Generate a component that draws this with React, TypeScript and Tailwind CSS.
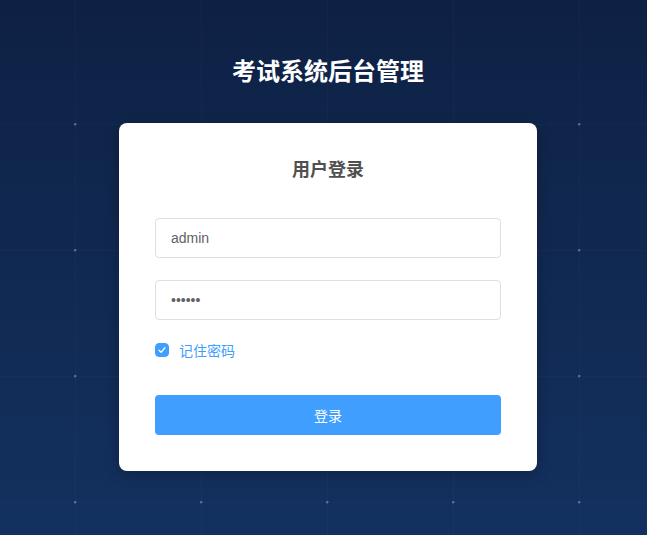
import React, { useState } from 'react';

const cjk = "font-['Microsoft_YaHei','Noto_Sans_CJK_SC',sans-serif]";

const App = () => {
  const [remember, setRemember] = useState(true);

  return (
    <div className="h-screen w-full overflow-hidden pl-[9px] bg-[radial-gradient(circle_at_1px_1px,rgba(140,165,210,0.5)_1.1px,transparent_1.9px),linear-gradient(to_right,rgba(255,255,255,0.02)_1px,transparent_1px),linear-gradient(to_bottom,rgba(255,255,255,0.02)_1px,transparent_1px),linear-gradient(180deg,#0e2144_0%,#13315f_100%)] bg-[#0f2548] [background-size:126px_126px,126px_126px,126px_126px,100%_100%] [background-position:74px_123px,75px_124px,75px_124px,0_0]">
      <h1
        className={`${cjk} pt-[54px] text-center text-2xl leading-8 font-bold text-white`}
      >
        考试系统后台管理
      </h1>

      <div className="mx-auto mt-[37px] w-[418px] rounded-lg bg-white px-9 pt-8 pb-9 shadow-[0_4px_14px_rgba(0,0,0,0.25)]">
        <h2
          className={`${cjk} text-center text-lg leading-[26px] font-bold text-[#505050]`}
        >
          用户登录
        </h2>

        <div className="mt-[37px] flex flex-col gap-[22px]">
          <input
            type="text"
            defaultValue="admin"
            className="h-10 w-full rounded border border-[#dcdfe6] bg-white px-[15px] font-['Liberation_Sans',Arial,sans-serif] text-sm text-[#606266] outline-none"
          />
          <input
            type="password"
            defaultValue="123456"
            className="h-10 w-full rounded border border-[#dcdfe6] bg-white px-[15px] font-['Liberation_Sans',Arial,sans-serif] text-sm text-[#606266] outline-none"
          />
        </div>

        <label
          className="mt-5 flex h-5 cursor-pointer items-center gap-[10px]"
          onClick={() => setRemember(!remember)}
        >
          <span
            className={`flex h-[14px] w-[14px] items-center justify-center rounded-sm border ${
              remember ? 'border-[#409eff] bg-[#409eff]' : 'border-[#dcdfe6] bg-white'
            }`}
          >
            {remember && (
              <svg width="10" height="10" viewBox="0 0 10 10" fill="none">
                <path
                  d="M2 5.2 L4.1 7.2 L8 2.8"
                  stroke="white"
                  strokeWidth="1.3"
                  strokeLinecap="round"
                  strokeLinejoin="round"
                />
              </svg>
            )}
          </span>
          <span className={`${cjk} text-sm text-[#409eff]`}>记住密码</span>
        </label>

        <button
          type="button"
          className={`${cjk} mt-[35px] h-10 w-full rounded bg-[#409eff] text-sm text-white`}
        >
          登录
        </button>
      </div>
    </div>
  );
};

export default App;
